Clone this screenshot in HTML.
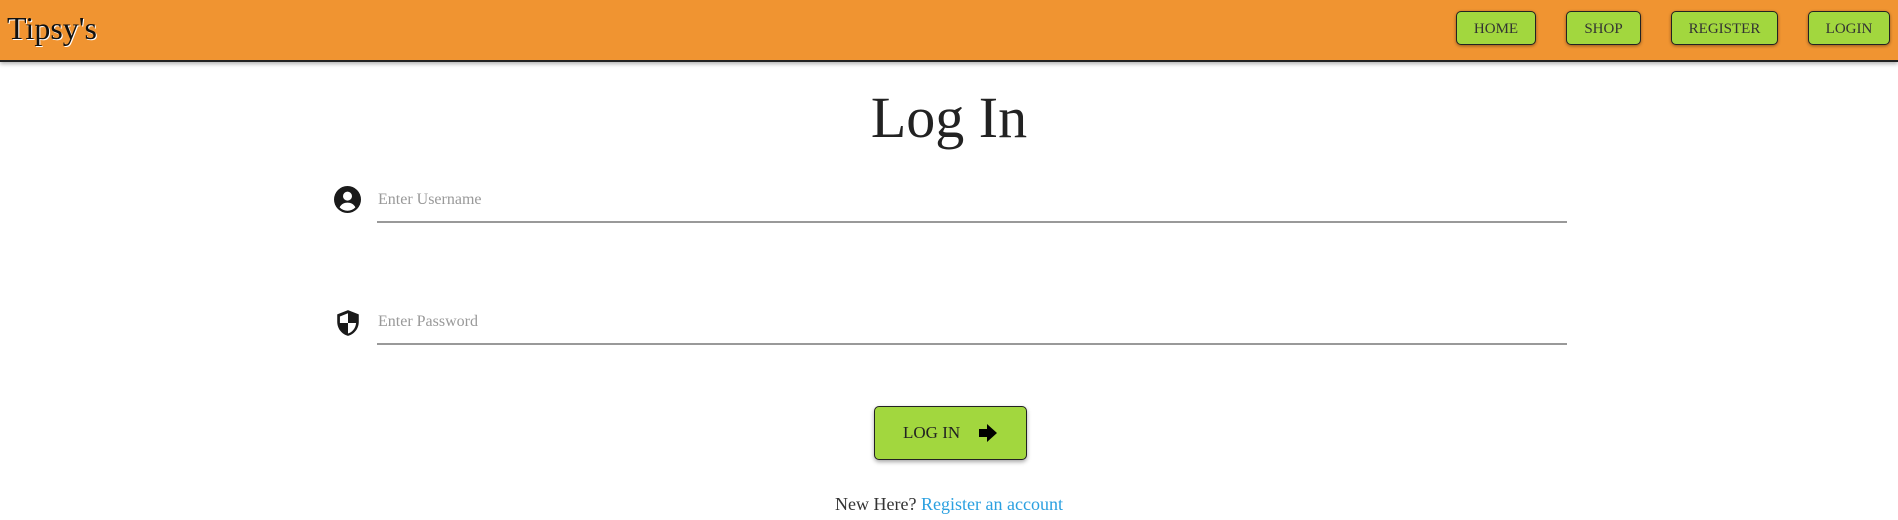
<!DOCTYPE html>
<html><head><style>
body{margin:0;width:1898px;height:520px;overflow:hidden;background:#fff;font-family:"Liberation Serif",serif;position:relative}
.hdr{position:absolute;left:0;top:0;width:1898px;height:60px;background:#f09431;border-bottom:2px solid #222;box-shadow:0 2px 4px rgba(0,0,0,.3)}
.logo{position:absolute;left:7px;top:10px;font-size:32px;color:#111;text-shadow:1px 1px 0 #fff}
.nb{position:absolute;top:11px;height:34px;background:#a2d73e;border:1.5px solid #222;border-radius:5px;box-sizing:border-box;font-size:15px;color:#333;display:flex;align-items:center;justify-content:center;box-shadow:0 1px 3px rgba(0,0,0,.4);padding-top:2px}
h1{position:absolute;top:84px;left:0;width:1898px;text-align:center;margin:0;font-weight:normal;font-size:58px;color:#222}
.ph{position:absolute;left:378px;font-size:16px;color:#999}
.ln{position:absolute;left:377px;width:1190px;height:2px;background:#999}
.btn{position:absolute;left:874px;top:406px;width:153px;height:54px;box-sizing:border-box;background:#a2d73e;border:1.5px solid #222;border-radius:5px;box-shadow:0 2px 4px rgba(0,0,0,.35);font-size:17px;color:#222}
.ft{position:absolute;top:494px;left:0;width:1898px;text-align:center;font-size:18px;color:#333}
.ft span{color:#2ba0e0}
</style></head><body>
<div class="hdr"><div class="logo">Tipsy's</div>
<div class="nb" style="left:1456px;width:80px">HOME</div>
<div class="nb" style="left:1566px;width:75px">SHOP</div>
<div class="nb" style="left:1671px;width:107px">REGISTER</div>
<div class="nb" style="left:1808px;width:82px">LOGIN</div>
</div>
<h1>Log In</h1>
<svg style="position:absolute;left:334px;top:186px" width="27" height="27" viewBox="0 0 24 24"><circle cx="12" cy="12" r="12" fill="#1a1a1a"/><circle cx="12" cy="9" r="4" fill="#fff"/><path d="M5 19c1.5-3 4-4.2 7-4.2s5.5 1.2 7 4.2c-2 2-4.3 3-7 3s-5-1-7-3z" fill="#fff"/></svg>
<div class="ph" style="top:191px">Enter Username</div>
<div class="ln" style="top:221px"></div>
<svg style="position:absolute;left:335px;top:309px" width="26" height="28" viewBox="0 0 24 26"><path d="M12 1L2 5v7c0 6.5 4.5 11.5 10 13 5.5-1.5 10-6.5 10-13V5z" fill="#1a1a1a"/><path d="M12 4v9H4.5V7zM12 13h7.5c-.5 5-3.5 8.5-7.5 9.8z" fill="#fff"/></svg>
<div class="ph" style="top:313px">Enter Password</div>
<div class="ln" style="top:343px"></div>
<div class="btn"><span style="position:absolute;left:28px;top:16px">LOG IN</span>
<svg style="position:absolute;left:104px;top:17px" width="18" height="18" viewBox="0 0 18 18"><path d="M0 5h8V0l10 9-10 9v-5H0z" fill="#000"/></svg></div>
<div class="ft">New Here? <span>Register an account</span></div>
</body></html>
